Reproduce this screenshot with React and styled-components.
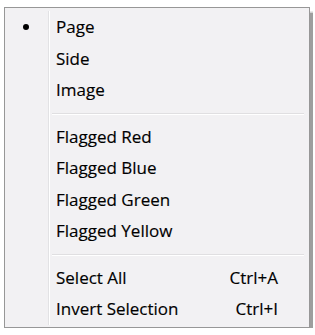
import React from "react";
import styled, { createGlobalStyle } from "styled-components";

const Global = createGlobalStyle`
  html, body { margin: 0; padding: 0; background: #ffffff; }
  body { font-family: "Open Sans", "Noto Sans", sans-serif; }
`;

const Page = styled.div`
  padding: 7px 0 0 4px;
`;

const Menu = styled.div`
  width: 300px;
  box-sizing: content-box;
  border: 1px solid #979797;
  background: #f2f1f3;
  padding: 3px 2px 2px 2px;
  box-shadow: 3px 3px 1px -0.5px rgba(0, 0, 0, 0.38);
  display: flex;
  flex-direction: column;
`;

const Row = styled.div`
  display: grid;
  grid-template-columns: 42px 1fr auto;
  height: 31.5px;
  align-items: stretch;
  font-size: 17px;
  color: #000;
  -webkit-text-stroke: 0.15px #000;
`;

const Gutter = styled.div`
  border-right: 1px solid #e2e2e4;
  box-shadow: 1px 0 0 #ffffff;
  display: flex;
  align-items: center;
  justify-content: center;
  padding-right: 4px;
`;

const Bullet = styled.span`
  width: 6px;
  height: 6px;
  border-radius: 50%;
  background: #000;
`;

const Label = styled.span`
  display: flex;
  align-items: center;
  padding-left: 7px;
`;

const Shortcut = styled.span`
  display: flex;
  align-items: center;
  justify-content: flex-end;
  padding-right: 29px;
`;

const SepRow = styled.div`
  display: grid;
  grid-template-columns: 42px 1fr;
  height: 15px;
`;

const SepLine = styled.div`
  display: flex;
  align-items: center;
  padding: 0 3px 0 3px;
  &::before {
    content: "";
    flex: 1;
    height: 1px;
    background: #e0dfe1;
    box-shadow: 0 1px 0 #ffffff;
  }
`;

const groups = [
  [{ label: "Page", checked: true }, { label: "Side" }, { label: "Image" }],
  [
    { label: "Flagged Red" },
    { label: "Flagged Blue" },
    { label: "Flagged Green" },
    { label: "Flagged Yellow" },
  ],
  [
    { label: "Select All", shortcut: "Ctrl+A" },
    { label: "Invert Selection", shortcut: "Ctrl+I" },
  ],
];

export default function App() {
  return (
    <>
      <Global />
      <Page>
        <Menu>
          {groups.map((g, gi) => (
            <React.Fragment key={gi}>
              {gi > 0 && (
                <SepRow>
                  <Gutter />
                  <SepLine />
                </SepRow>
              )}
              {g.map((it) => (
                <Row key={it.label}>
                  <Gutter>{it.checked && <Bullet />}</Gutter>
                  <Label>{it.label}</Label>
                  <Shortcut>{it.shortcut || ""}</Shortcut>
                </Row>
              ))}
            </React.Fragment>
          ))}
        </Menu>
      </Page>
    </>
  );
}
